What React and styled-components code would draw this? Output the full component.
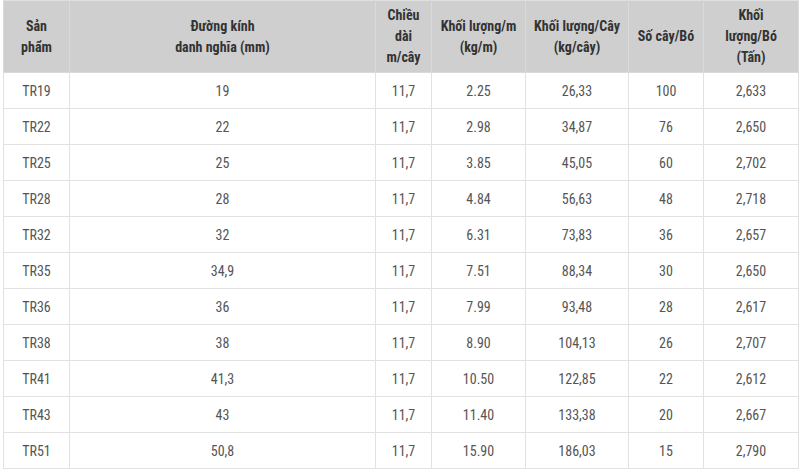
import React from "react";
import styled, { createGlobalStyle } from "styled-components";

const GlobalStyle = createGlobalStyle`
  html, body {
    margin: 0;
    padding: 0;
    background: #ffffff;
  }
  body {
    font-family: "Roboto Condensed", "Liberation Sans Narrow", Roboto, sans-serif;
  }
`;

const Page = styled.div`
  padding: 0 2px 0 3px;
`;

const Table = styled.table`
  width: 795px;
  border-collapse: collapse;
  table-layout: fixed;
  border: 1px solid #e0e0e0;
  font-size: 13px;
`;

const HeadCell = styled.th`
  background: #cfcfcf;
  color: #333333;
  font-weight: 700;
  font-size: 14px;
  line-height: 21px;
  height: 71px;
  padding: 0 4px;
  text-align: center;
  vertical-align: middle;
  border: 1px solid #dadada;
  border-top: none;
`;

const Cell = styled.td`
  color: #555555;
  height: 35px;
  padding: 0 4px;
  text-align: center;
  vertical-align: middle;
  border: 1px solid #e2e2e2;
  font-size: 14px;
`;

const columns = [
  { w: 66, label: ["Sản", "phẩm"] },
  { w: 306, label: ["Đường kính", "danh nghĩa (mm)"] },
  { w: 56, label: ["Chiều", "dài", "m/cây"] },
  { w: 94, label: ["Khối lượng/m", "(kg/m)"] },
  { w: 103, label: ["Khối lượng/Cây", "(kg/cây)"] },
  { w: 75, label: ["Số cây/Bó"] },
  { w: 95, label: ["Khối", "lượng/Bó", "(Tấn)"] },
];

const rows = [
  ["TR19", "19", "11,7", "2.25", "26,33", "100", "2,633"],
  ["TR22", "22", "11,7", "2.98", "34,87", "76", "2,650"],
  ["TR25", "25", "11,7", "3.85", "45,05", "60", "2,702"],
  ["TR28", "28", "11,7", "4.84", "56,63", "48", "2,718"],
  ["TR32", "32", "11,7", "6.31", "73,83", "36", "2,657"],
  ["TR35", "34,9", "11,7", "7.51", "88,34", "30", "2,650"],
  ["TR36", "36", "11,7", "7.99", "93,48", "28", "2,617"],
  ["TR38", "38", "11,7", "8.90", "104,13", "26", "2,707"],
  ["TR41", "41,3", "11,7", "10.50", "122,85", "22", "2,612"],
  ["TR43", "43", "11,7", "11.40", "133,38", "20", "2,667"],
  ["TR51", "50,8", "11,7", "15.90", "186,03", "15", "2,790"],
];

export default function App() {
  return (
    <>
      <GlobalStyle />
      <Page>
        <Table>
          <colgroup>
            {columns.map((c, i) => (
              <col key={i} style={{ width: c.w }} />
            ))}
          </colgroup>
          <thead>
            <tr>
              {columns.map((c, i) => (
                <HeadCell key={i}>
                  {c.label.map((l, j) => (
                    <React.Fragment key={j}>
                      {j > 0 && <br />}
                      {l}
                    </React.Fragment>
                  ))}
                </HeadCell>
              ))}
            </tr>
          </thead>
          <tbody>
            {rows.map((r) => (
              <tr key={r[0]}>
                {r.map((v, i) => (
                  <Cell key={i}>{v}</Cell>
                ))}
              </tr>
            ))}
          </tbody>
        </Table>
      </Page>
    </>
  );
}
